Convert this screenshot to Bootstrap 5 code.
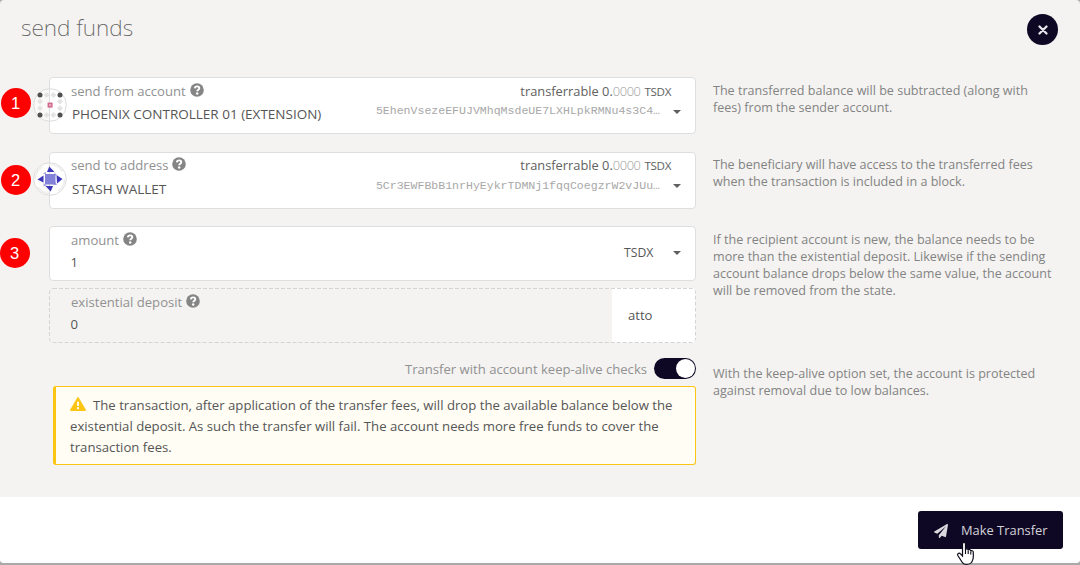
<!DOCTYPE html>
<html lang="en">
<head>
<meta charset="utf-8">
<meta name="viewport" content="width=device-width, initial-scale=1">
<title>send funds</title>
<link rel="stylesheet" href="https://cdn.jsdelivr.net/npm/bootstrap@5.3.0/dist/css/bootstrap.min.css">
<style>
  body { font-family: "Open Sans", "Noto Sans", sans-serif; font-size: 13.1px; line-height: 20px; color: #565656; background: #a9a9a9; overflow: hidden; }
  .dialog { height: 563px; background: #f4f3f1; border-radius: 4px; overflow: hidden; }
  .dialog-head { height: 77px; padding: 13px 22px 0 21px; }
  .dialog-head h1 { font: 200 22.7px/30px "Noto Sans", sans-serif; color: #606060; }
  .close-btn { width: 31px; height: 31px; background: #0f0825; margin-top: 1px; }
  .form-grid { display: grid; grid-template-columns: 647px 346px; column-gap: 17px; padding-left: 49px; height: 420px; grid-template-rows: 75px 74px 132px auto; align-items: start; }
  .hint { font-size: 12.57px; line-height: 17px; color: #838383; padding-top: 5px; white-space: nowrap; }
  .field { background: #fff; border: 1px solid #dededf; border-radius: 4px; padding: 4px 0 0 21px; }
  .acct { height: 57px; }
  .acct.to { padding-top: 3px; }
  .num { height: 55px; }
  .static { background: #f4f3f1; border: 0; border-radius: 4px; overflow: hidden; padding: 5px 0 0 22px; margin-top: 7px; }
  .dash { top: 0; left: 0; pointer-events: none; }
  .lbl { color: #919191; line-height: 19px; }
  .q { width: 14px; height: 14px; margin-left: 4px; margin-top: 1px; }
  .acct-name { font-size: 13.5px; margin: 3px 0 0 1px; }
  .balance { right: 24px; top: 4px; line-height: 19px; font-size: 12.85px; color: #616161; }
  .to .balance { top: 3px; }
  .balance i { font-style: normal; font-weight: 300; color: #9a9a9a; letter-spacing: -.4px; }
  .balance b { font-weight: 400; font-size: 11.6px; letter-spacing: -.35px; margin-left: 4px; }
  .addr { right: 35px; top: 24px; font: 11.56px/18px "Liberation Mono", monospace; color: #a8a8a8; }
  .caret { border: 4px solid transparent; border-top-color: #606060; border-bottom: 0; width: 0; height: 0; }
  .caret-pos { right: 14px; top: 32px; }
  .to .caret-pos { top: 31px; }
  .identicon { left: -17px; top: 10px; }
  .step { width: 30px; height: 30px; background: #fe0000; font: 16.5px/30px "Liberation Sans", sans-serif; }
  .unit { width: 84px; }
  .amount-unit { padding: 0 14px 0 13px; margin-top: -5px; font-size: 12.2px; }
  .toggle { width: 42px; height: 21px; background: #0f0825; border-radius: 11px; padding: 1px; }
  .toggle span { width: 19px; height: 19px; }
  .warn { margin: 7px 0 0 4px; height: 79px; background: #fffdf4; border: 1px solid #fdc513; border-left-width: 3px; border-radius: 3px; padding: 8px 0 0 14px; line-height: 21px; white-space: nowrap; font-size: 13.18px; }
  .dialog-foot { height: 66px; padding: 14px 17px 0 0; }
  .send-btn { width: 145px; height: 38px; background: #0f0825; color: #d4d3d9; border-radius: 3px; font-size: 12.9px; padding-left: 16px; }
  .pointer { left: 957px; top: 541px; }
</style>
</head>
<body>
<svg class="d-none">
  <symbol id="help" viewBox="0 0 14 14"><circle cx="7" cy="7" r="6.8" fill="#858585"/><path d="M4.8 5.4C5 3.9 6 3.4 7.100 3.400C8.400 3.400 9.300 4.200 9.300 5.200C9.300 6.800 7.200 6.700 7.200 8.300" fill="none" stroke="#fff" stroke-width="1.900"/><circle cx="7.200" cy="10.500" r="1.200" fill="#fff"/></symbol>
</svg>
<div class="dialog">
  <header class="dialog-head d-flex justify-content-between align-items-start">
    <h1 class="m-0">send funds</h1>
    <button class="close-btn btn rounded-circle p-0 border-0 d-flex align-items-center justify-content-center" aria-label="Close">
      <svg width="10" height="10" viewBox="0 0 10 10"><path d="M1.500 1.500L8.500 8.500M8.500 1.500L1.500 8.500" stroke="#e6e5e9" stroke-width="2.300" stroke-linecap="round"/></svg>
    </button>
  </header>

  <main class="form-grid">
    <div class="field acct position-relative">
      <span class="step position-absolute rounded-circle text-white text-center" style="top:9.500px;left:-49.500px">1</span>
      <svg class="identicon position-absolute" width="34" height="34" viewBox="0 0 34 34">
        <circle cx="17" cy="17" r="16.300" fill="#fff" fill-opacity=".55" stroke="#dcdcdc"/>
        <path d="M16.500 1V33" stroke="#dededf"/>
        <g fill="#505050"><circle cx="7" cy="7" r="2.500"/><circle cx="27" cy="7" r="2.500"/><circle cx="7" cy="27" r="2.500"/><circle cx="27" cy="27" r="2.500"/></g>
        <g fill="#e4e4e4"><path id="dm" d="M13.600 4L16.600 7L13.600 10L10.600 7Z"/><use href="#dm" x="6.800"/><use href="#dm" y="20"/><use href="#dm" x="6.800" y="20"/><use href="#dm" x="-6.600" y="6.600"/><use href="#dm" x="-6.600" y="13.200"/><use href="#dm" x="13.400" y="6.600"/><use href="#dm" x="13.400" y="13.200"/></g>
        <rect x="15.300" y="15.300" width="3.600" height="3.600" fill="#eba5ba" stroke="#d0678b" stroke-width="1.400"/>
      </svg>
      <div class="lbl d-flex">send from account<svg class="q"><use href="#help"/></svg></div>
      <div class="acct-name">PHOENIX CONTROLLER 01 (EXTENSION)</div>
      <div class="balance position-absolute">transferrable 0.<i>0000</i><b>TSDX</b></div>
      <div class="addr position-absolute">5EhenVsezeEFUJVMhqMsdeUE7LXHLpkRMNu4s3C4…</div>
      <span class="caret caret-pos position-absolute"></span>
    </div>
    <p class="hint m-0">The transferred balance will be subtracted (along with<br>fees) from the sender account.</p>

    <div class="field acct to position-relative">
      <span class="step position-absolute rounded-circle text-white text-center" style="top:11.500px;left:-49.500px">2</span>
      <svg class="identicon position-absolute" style="top:9px" width="34" height="34" viewBox="0 0 34 34">
        <circle cx="17" cy="17" r="16.300" fill="#fff" fill-opacity=".8" stroke="#dcdcdc"/>
        <circle cx="17" cy="17" r="14.500" fill="none" stroke="#eee" stroke-width="1.500" stroke-dasharray="14 8.800"/>
        <path d="M16.500 1V33" stroke="#dededf"/>
        <g fill="#3c37b8"><path d="M16.300 4.500L21.500 10H14Z"/><path d="M23.500 13L29.500 17L24 21.500Z"/><path d="M12.500 24H20L17.700 29.500Z"/><path d="M4.500 17.500L10.500 13.500V20.500Z"/></g>
        <g fill="#a9a7e3"><path d="M10.500 11L13 10V12H10.500ZM21 10L24 13L22.500 14ZM22.500 20L24 23H20ZM10.500 21L14 24H10.500Z"/></g>
        <rect x="12" y="12" width="10.500" height="10.500" fill="#8481d9"/>
      </svg>
      <div class="lbl d-flex">send to address<svg class="q"><use href="#help"/></svg></div>
      <div class="acct-name" style="margin-top:4px">STASH WALLET</div>
      <div class="balance position-absolute">transferrable 0.<i>0000</i><b>TSDX</b></div>
      <div class="addr position-absolute">5Cr3EWFBbB1nrHyEykrTDMNj1fqqCoegzrW2vJUu…</div>
      <span class="caret caret-pos position-absolute"></span>
    </div>
    <p class="hint m-0" style="padding-top:4px">The beneficiary will have access to the transferred fees<br>when the transaction is included in a block.</p>

    <div class="d-flex flex-column">
      <div class="field num d-flex position-relative">
        <span class="step position-absolute rounded-circle text-white text-center" style="top:10.500px;left:-50.500px">3</span>
        <div class="flex-grow-1">
          <div class="lbl d-flex">amount<svg class="q"><use href="#help"/></svg></div>
          <div style="margin:2px 0 0 -.500px">1</div>
        </div>
        <div class="unit amount-unit d-flex align-items-center justify-content-between"><span>TSDX</span><span class="caret"></span></div>
      </div>
      <div class="static num d-flex position-relative">
        <div class="flex-grow-1">
          <div class="lbl d-flex">existential deposit<svg class="q"><use href="#help"/></svg></div>
          <div style="margin:2px 0 0 -.500px">0</div>
        </div>
        <div class="unit bg-white" style="margin-top:-5px;padding:17px 0 0 16px">atto</div>
        <svg class="dash position-absolute" width="647" height="55"><rect x=".5" y=".5" width="646" height="54" rx="3.500" fill="none" stroke="#d4d4d4" stroke-dasharray="4 2"/></svg>
      </div>
    </div>
    <p class="hint m-0">If the recipient account is new, the balance needs to be<br>more than the existential deposit. Likewise if the sending<br>account balance drops below the same value, the account<br>will be removed from the state.</p>

    <div>
      <div class="d-flex justify-content-end align-items-center"><span class="lbl" style="margin:2px 7px 0 0">Transfer with account keep-alive checks</span>
        <span class="toggle d-flex justify-content-end"><span class="bg-white rounded-circle"></span></span></div>
      <div class="warn"><svg width="16" height="14" viewBox="0 0 16 14" style="margin:-4px 7px 0 0"><path d="M8 .8L15.200 13.200H.8Z" fill="#fdc513" stroke="#fdc513" stroke-width="1.500" stroke-linejoin="round"/><path d="M8 4.800V9" stroke="#fffdf4" stroke-width="1.900"/><circle cx="8" cy="11.200" r="1.150" fill="#fffdf4"/></svg>The transaction, after application of the transfer fees, will drop the available balance below the<br>existential deposit. As such the transfer will fail. The account needs more free funds to cover the<br>transaction fees.</div>
    </div>
    <p class="hint m-0" style="padding-top:7px">With the keep-alive option set, the account is protected<br>against removal due to low balances.</p>
  </main>

  <footer class="dialog-foot bg-white d-flex justify-content-end align-items-start">
    <button class="send-btn btn border-0 d-flex align-items-center pb-0 pe-0" style="padding-top:1px">
      <svg width="14" height="14" viewBox="0 0 512 512" fill="#dad9de" style="margin-right:13px"><path d="M476 3.200L12.500 270.600c-18.100 10.400-15.800 35.600 2.200 43.200L121 358.400l287.300-253.200c5.500-4.900 13.300 2.600 8.600 8.300L176 407v80.500c0 23.600 28.500 32.900 42.500 15.800L282 426l124.600 52.200c14.200 6 30.400-2.900 33-18.200l72-432C515 7.800 493.300-6.800 476 3.200z"/></svg>
      Make Transfer
    </button>
  </footer>
</div>
<svg class="pointer position-absolute" width="17" height="24" viewBox="0 0 17 24"><path d="M5.500 15V3C5.500.9 8.500.9 8.500 3V9C8.500 7.400 11.200 7.400 11.200 9.300C11.500 8 13.800 8.300 13.800 10.200C14.300 9.200 16.300 9.600 16.300 11.300V16C16.300 19 15 20 14.500 21.500Q13 23.400 9.500 23.400Q6.500 23.400 5.300 21.500L1 14.800C-.2 12.800 2.200 11.200 3.500 12.800Z" fill="#fff" stroke="#0a0a18" stroke-width="1.200"/><path d="M8.500 9V13M11.200 9.500V13M13.800 10.500V13.500" stroke="#0a0a18" stroke-width="1.100"/></svg>
<script src="https://cdn.jsdelivr.net/npm/bootstrap@5.3.0/dist/js/bootstrap.bundle.min.js"></script>
</body>
</html>
